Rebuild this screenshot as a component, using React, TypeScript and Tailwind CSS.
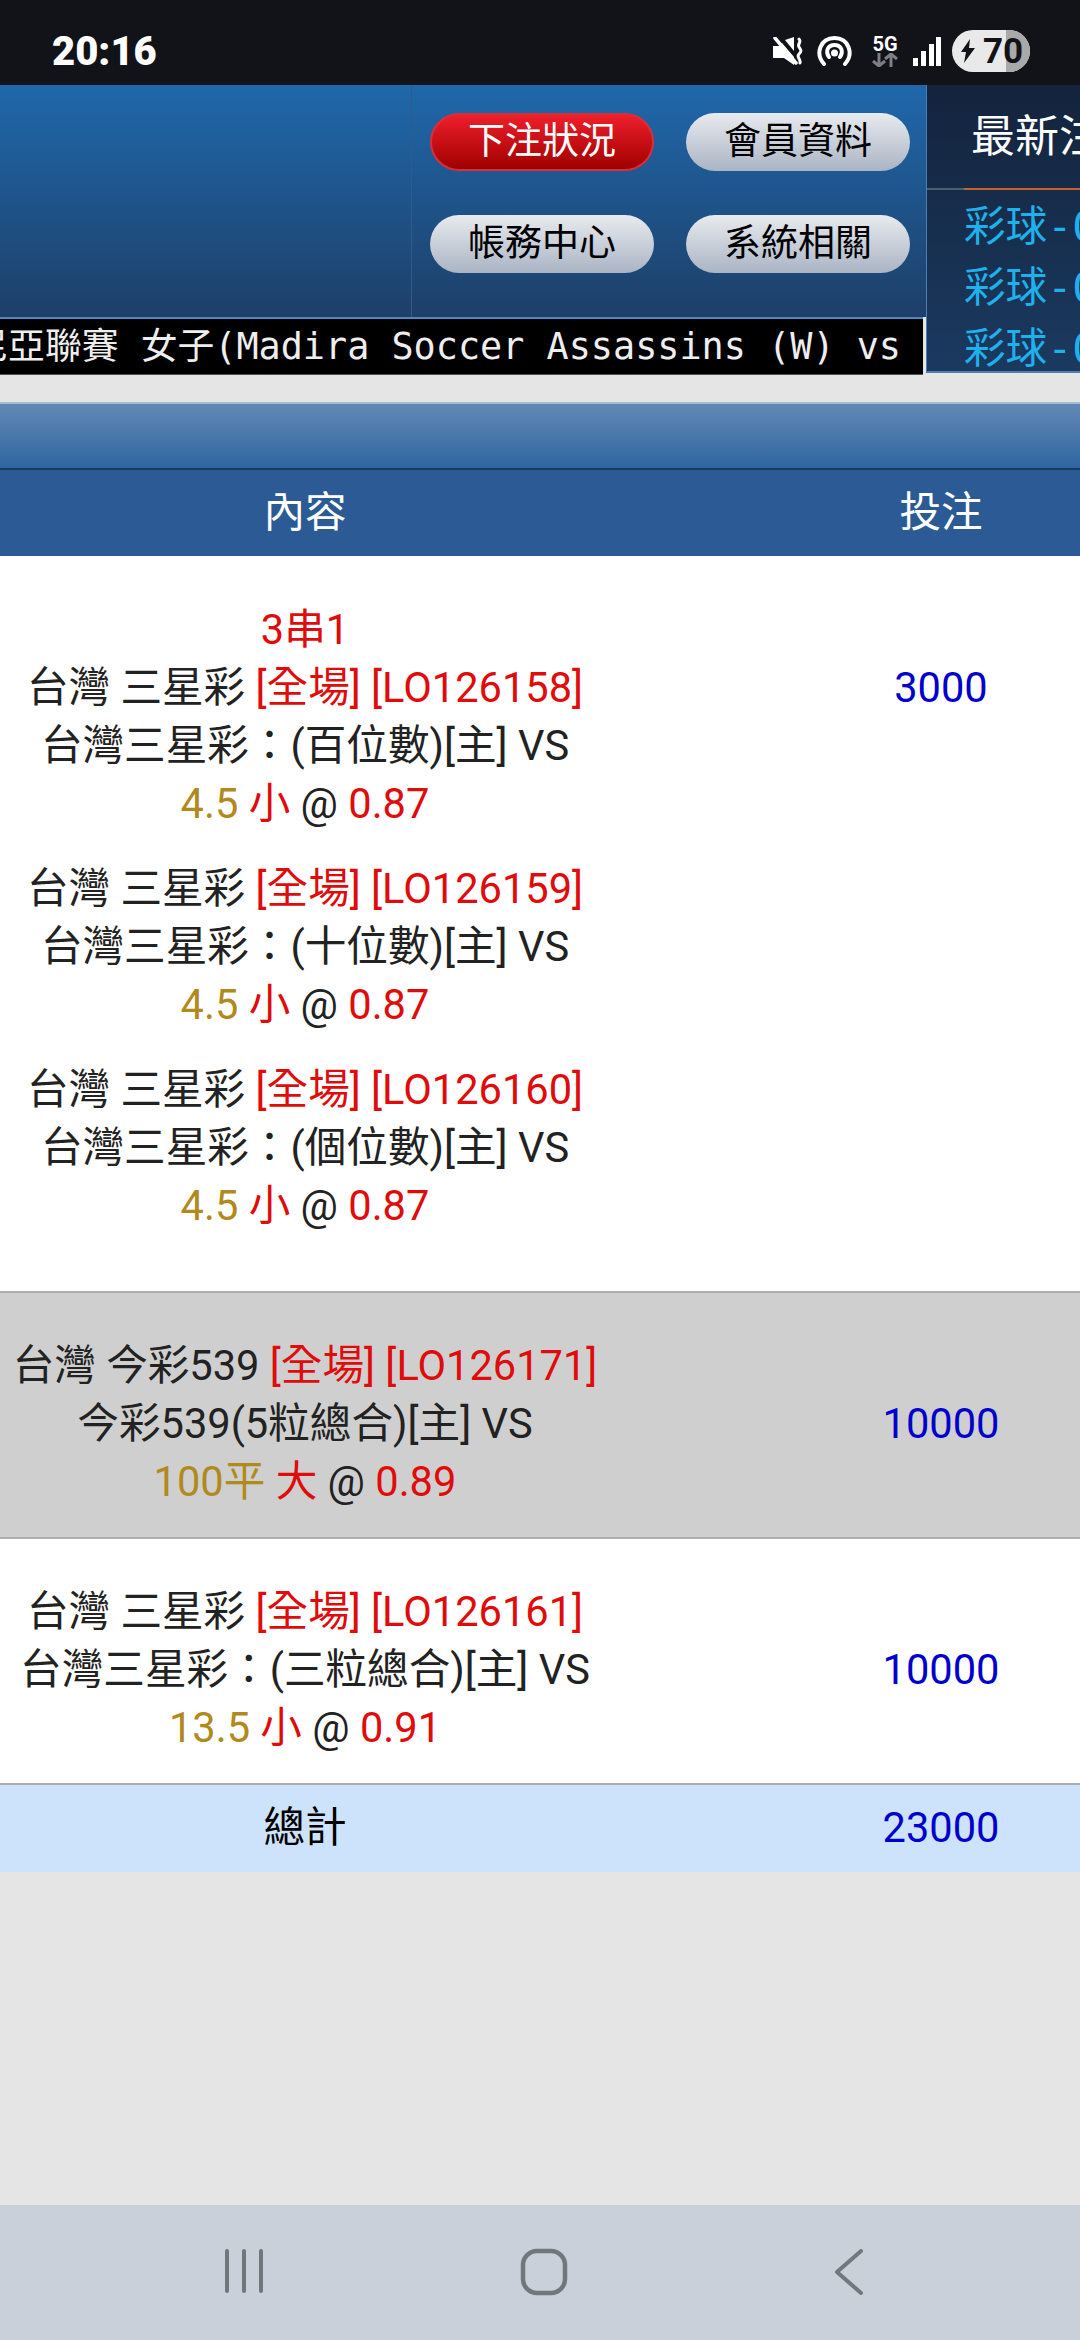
const red = "text-[#e00b0b]"
const gold = "text-[#b08a1c]"

type Bet = { league: string; code: string; market: string; line: string; side: string; odds: string }

function BetLines({ bet }: { bet: Bet }) {
  return (
    <div>
      <p>
        {bet.league} <span className={red}>[全場] [{bet.code}]</span>
      </p>
      <p>{bet.market}[主] VS</p>
      <p>
        <span className={gold}>{bet.line}</span> <span className={red}>{bet.side}</span> @{" "}
        <span className={red}>{bet.odds}</span>
      </p>
    </div>
  )
}

function NavPill({ label, active = false }: { label: string; active?: boolean }) {
  return (
    <div
      className={
        active
          ? "flex h-[58px] w-[224px] items-center justify-center rounded-full border-2 border-[#d8303a] bg-[linear-gradient(#ee1f2b,#a00000)] text-[37px] text-white"
          : "flex h-[58px] w-[224px] items-center justify-center rounded-full bg-[linear-gradient(#e8ebef,#aab4c4)] text-[37px] text-black"
      }
    >
      {label}
    </div>
  )
}

function StatusIcons() {
  return (
    <div className="flex items-center">
      <svg width="30" height="28" viewBox="0 0 30 28" className="mr-[14px]">
        <path d="M0 9h6l3-3 12 14v8l-10-7H0z" fill="#fff" />
        <path d="M12 3l9-3v14z" fill="#fff" />
        <path d="M2 1l21 25" stroke="#fff" strokeWidth="3.500" strokeLinecap="round" />
        <path d="M26 2c3 3-2 5 0 8s3 4 0 7 2 5 1 9" stroke="#fff" strokeWidth="3" fill="none" strokeLinecap="round" />
      </svg>
      <svg width="35" height="30" viewBox="0 0 35 30" fill="none" stroke="#fff" strokeWidth="4" strokeLinecap="round" className="mr-[20px]">
        <path d="M7 28C-2 18 3 2 17.500 2S37 18 28 28" />
        <path d="M12 21C8 15 11 9 17.500 9S27 15 23 21" />
        <circle cx="17.500" cy="17" r="3.500" fill="#fff" stroke="none" />
      </svg>
      <div className="mr-[15px] flex w-[26px] flex-col items-center">
        <span className="text-[20px] leading-[18px] font-bold text-white [font-family:Roboto]">5G</span>
        <svg width="26" height="14" viewBox="0 0 26 14" fill="none" stroke="#7c7f83" strokeWidth="3">
          <path d="M7 0v13M1 8l6 5 6-5M19 14V1M13 6l6-5 6 5" />
        </svg>
      </div>
      <svg width="28" height="29" viewBox="0 0 28 29" fill="#fff" className="mr-[11px]">
        <rect x="0" y="21" width="5" height="8" />
        <rect x="8" y="14" width="5" height="15" />
        <rect x="16" y="7" width="5" height="22" />
        <rect x="23" y="0" width="5" height="29" />
      </svg>
      <div className="relative flex h-[42px] w-[78px] items-center overflow-hidden rounded-full bg-[#e9e9e9] pl-[8px]">
        <div className="absolute top-0 right-0 h-full w-[24px] bg-[#a9a9a9]" />
        <svg width="16" height="24" viewBox="0 0 16 24" className="relative">
          <path d="M10 0L1 13h5l-2 11 11-15H9z" fill="#111319" />
        </svg>
        <span className="relative ml-[7px] text-[35px] leading-none font-bold text-[#111319] [font-family:Roboto]">70</span>
      </div>
    </div>
  )
}

export default function App() {
  return (
    <div className="flex h-[2340px] w-[1080px] flex-col overflow-hidden bg-[#e5e5e5] [font-family:Roboto,'Noto_Sans_CJK_TC',sans-serif]">
      <div className="flex h-[85px] items-start justify-between bg-[#111319] pt-[30px] pr-[50px] pl-[52px]">
        <span className="text-[40px] leading-[44px] font-black text-white">20:16</span>
        <StatusIcons />
      </div>

      <div className="flex h-[290px]">
        <div className="flex w-[926px] flex-col">
          <div className="flex h-[232px] bg-[linear-gradient(#1f68ab,#1e3f68)]">
            <div className="w-[412px] border-r border-[#2d5b8e]" />
            <div className="grid grid-cols-[224px_224px] content-start gap-x-[32px] gap-y-[44px] pt-[28px] pl-[18px]">
              <NavPill label="下注狀況" active />
              <NavPill label="會員資料" />
              <NavPill label="帳務中心" />
              <NavPill label="系統相關" />
            </div>
          </div>
          <div className="flex h-[58px] w-[923px] items-center justify-end overflow-hidden whitespace-nowrap border-t-2 border-b border-t-[#4a8ac8] border-b-[#555] bg-black pr-[22px] text-[36.800px] text-[#eeeeee] [font-family:'DejaVu_Sans_Mono','Noto_Sans_CJK_TC',monospace]">
            羅馬尼亞聯賽 女子(Madira Soccer Assassins (W) vs
          </div>
        </div>

        <div className="flex h-[288px] w-[154px] flex-col overflow-hidden border-b-2 border-l border-[#4a7eb5] bg-[linear-gradient(#13233c,#1b3a60)] whitespace-nowrap [font-family:'DejaVu_Sans_Mono','Noto_Sans_CJK_TC',monospace]">
          <div className="flex h-[103px] shrink-0 items-center pt-[1px] pl-[44px] text-[44px] text-white">最新注單</div>
          <div className="flex h-[2px] shrink-0">
            <div className="w-[37px] bg-[#4d5f74]" />
            <div className="flex-1 bg-[#c8622c]" />
          </div>
          <div className="pt-[6px] pl-[37px] text-[41.600px] leading-[61px] text-[#1fb1ec]">
            <p>彩球-01</p>
            <p>彩球-01</p>
            <p>彩球-01</p>
          </div>
        </div>
      </div>

      <div className="mt-[27px] h-[68px] border-t-2 border-b-2 border-t-[#a9bccf] border-b-[#17395f] bg-[linear-gradient(#6289b5,#2f669f)]" />

      <div className="grid h-[86px] grid-cols-[610px_1fr] items-center bg-[#2b5a94] pt-[1px] text-[41.600px] text-white">
        <div className="text-center">內容</div>
        <div className="pl-[192px] text-center">投注</div>
      </div>

      <div className="grid grid-cols-[610px_1fr] bg-white pt-[45px] pb-[56px] text-center text-[41.600px] leading-[58px] text-[#222]">
        <div className="flex flex-col gap-[27px]">
          <div>
            <p className={red}>3串1</p>
            <BetLines bet={{ league: "台灣 三星彩", code: "LO126158", market: "台灣三星彩：(百位數)", line: "4.5", side: "小", odds: "0.87" }} />
          </div>
          <BetLines bet={{ league: "台灣 三星彩", code: "LO126159", market: "台灣三星彩：(十位數)", line: "4.5", side: "小", odds: "0.87" }} />
          <BetLines bet={{ league: "台灣 三星彩", code: "LO126160", market: "台灣三星彩：(個位數)", line: "4.5", side: "小", odds: "0.87" }} />
        </div>
        <div className="pt-[58px] pl-[192px] text-[#0000cc]">3000</div>
      </div>

      <div className="grid h-[248px] grid-cols-[610px_1fr] items-center border-t-2 border-b-2 border-[#aeaeae] bg-[#cfcfcf] pt-[18px] text-center text-[41.600px] leading-[58px] text-[#222]">
        <BetLines bet={{ league: "台灣 今彩539", code: "LO126171", market: "今彩539(5粒總合)", line: "100平", side: "大", odds: "0.89" }} />
        <div className="pl-[192px] text-[#0000cc]">10000</div>
      </div>

      <div className="grid h-[246px] grid-cols-[610px_1fr] items-center border-b-2 border-[#aeaeae] bg-white pt-[18px] text-center text-[41.600px] leading-[58px] text-[#222]">
        <BetLines bet={{ league: "台灣 三星彩", code: "LO126161", market: "台灣三星彩：(三粒總合)", line: "13.5", side: "小", odds: "0.91" }} />
        <div className="pl-[192px] text-[#0000cc]">10000</div>
      </div>

      <div className="grid h-[87px] grid-cols-[610px_1fr] items-center bg-[#cce3fb] text-center text-[41.600px]">
        <div className="text-black">總計</div>
        <div className="pl-[192px] text-[#0000cc]">23000</div>
      </div>

      <div className="flex-1" />

      <div className="flex h-[135px] shrink-0 items-start bg-[#c9d0d9] pt-[43px] pl-[223px]">
        <svg width="44" height="46" viewBox="0 0 44 46" stroke="#72777c" strokeWidth="4" strokeLinecap="round" className="mr-[253px]">
          <path d="M4 3v40M21 3v40M38 3v40" />
        </svg>
        <svg width="48" height="48" viewBox="0 0 48 48" fill="none" stroke="#72777c" strokeWidth="4.500" className="mr-[265px]">
          <rect x="3" y="3" width="42" height="42" rx="14" />
        </svg>
        <svg width="32" height="48" viewBox="0 0 32 48" fill="none" stroke="#72777c" strokeWidth="4" strokeLinecap="round" strokeLinejoin="round">
          <path d="M28 3L4 24l24 21" />
        </svg>
      </div>
    </div>
  )
}
